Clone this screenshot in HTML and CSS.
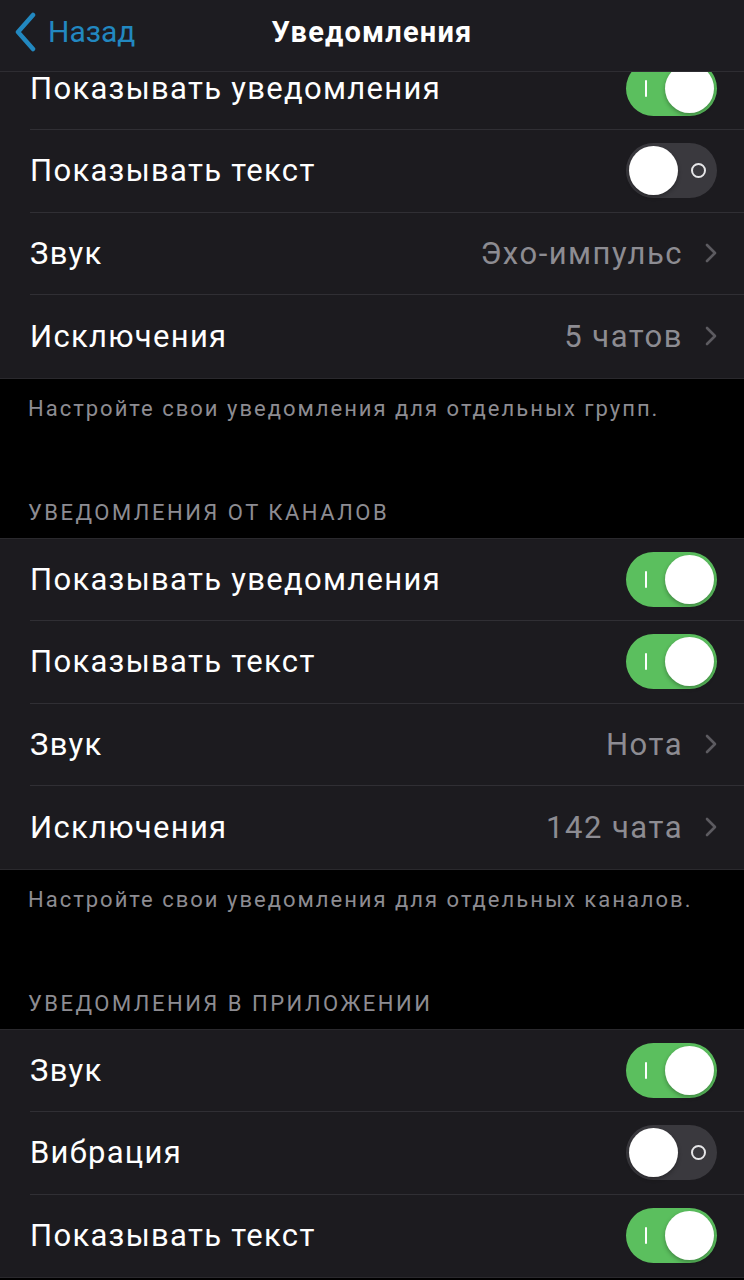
FILE: index.html
```html
<!DOCTYPE html>
<html>
<head>
<meta charset="utf-8">
<link rel="stylesheet" href="styles.css">
</head>
<body>

<div class="navbar">
  <a class="back" href="#">
    <svg class="back-icon" viewBox="0 0 24 40" width="24" height="40">
      <path d="M19 3 L4 20 L19 37" fill="none" stroke="currentColor" stroke-width="4.5" stroke-linecap="round" stroke-linejoin="round"/>
    </svg>
    <span>Назад</span>
  </a>
  <h1 class="title">Уведомления</h1>
  <span></span>
</div>

<div class="scroll">
  <div class="content">
    <div class="group">
      <div class="row">
        <span class="label">Показывать уведомления</span>
        <span class="switch on"></span>
      </div>
      <div class="row">
        <span class="label">Показывать текст</span>
        <span class="switch"></span>
      </div>
      <div class="row">
        <span class="label">Звук</span>
        <span class="value">Эхо-импульс</span>
        <svg class="chevron" viewBox="0 0 12 20" width="12" height="20"><path d="M2 2 L10 10 L2 18" fill="none" stroke="currentColor" stroke-width="2.6" stroke-linecap="round" stroke-linejoin="round"/></svg>
      </div>
      <div class="row">
        <span class="label">Исключения</span>
        <span class="value">5 чатов</span>
        <svg class="chevron" viewBox="0 0 12 20" width="12" height="20"><path d="M2 2 L10 10 L2 18" fill="none" stroke="currentColor" stroke-width="2.6" stroke-linecap="round" stroke-linejoin="round"/></svg>
      </div>
    </div>
    <p class="footer">Настройте свои уведомления для отдельных групп.</p>

    <h2 class="group-title">Уведомления от каналов</h2>
    <div class="group">
      <div class="row">
        <span class="label">Показывать уведомления</span>
        <span class="switch on"></span>
      </div>
      <div class="row">
        <span class="label">Показывать текст</span>
        <span class="switch on"></span>
      </div>
      <div class="row">
        <span class="label">Звук</span>
        <span class="value">Нота</span>
        <svg class="chevron" viewBox="0 0 12 20" width="12" height="20"><path d="M2 2 L10 10 L2 18" fill="none" stroke="currentColor" stroke-width="2.6" stroke-linecap="round" stroke-linejoin="round"/></svg>
      </div>
      <div class="row">
        <span class="label">Исключения</span>
        <span class="value">142 чата</span>
        <svg class="chevron" viewBox="0 0 12 20" width="12" height="20"><path d="M2 2 L10 10 L2 18" fill="none" stroke="currentColor" stroke-width="2.6" stroke-linecap="round" stroke-linejoin="round"/></svg>
      </div>
    </div>
    <p class="footer">Настройте свои уведомления для отдельных каналов.</p>

    <h2 class="group-title">Уведомления в приложении</h2>
    <div class="group">
      <div class="row">
        <span class="label">Звук</span>
        <span class="switch on"></span>
      </div>
      <div class="row">
        <span class="label">Вибрация</span>
        <span class="switch"></span>
      </div>
      <div class="row">
        <span class="label">Показывать текст</span>
        <span class="switch on"></span>
      </div>
    </div>
  </div>
</div>

</body>
</html>
```

FILE: styles.css
```css
html, body {
  margin: 0;
  padding: 0;
  height: 100%;
}

body {
  font-family: Roboto, "Noto Sans", Arial, sans-serif;
  background-color: #000;
  color: #fff;
  display: flex;
  flex-direction: column;
  overflow: hidden;
}

.navbar {
  height: 72px;
  flex-shrink: 0;
  box-sizing: border-box;
  padding-bottom: 8px;
  background-color: #1d1c21;
  border-bottom: 1px solid #2e2d32;
  display: grid;
  grid-template-columns: 1fr auto 1fr;
  align-items: center;
  position: relative;
  z-index: 2;
}

.back {
  display: flex;
  align-items: center;
  gap: 10px;
  padding-left: 14px;
  color: #2288c0;
  text-decoration: none;
  font-size: 30px;
}

.back-icon {
  display: block;
}

.title {
  margin: 0;
  font-size: 29px;
  font-weight: 700;
  letter-spacing: 1.2px;
  text-align: center;
}

.scroll {
  flex: 1;
  overflow: hidden;
}

.content {
  margin-top: -25.5px;
}

.group {
  background-color: #1c1b1f;
  border-top: 1px solid #2a292d;
  border-bottom: 1px solid #2a292d;
}

.row {
  height: 82.5px;
  margin-left: 30px;
  padding-right: 27px;
  display: flex;
  align-items: center;
  box-sizing: border-box;
  border-bottom: 1px solid #302f34;
}

.row:last-child {
  border-bottom: none;
}

.label {
  flex: 1;
  font-size: 31px;
  letter-spacing: 1.3px;
}

.value {
  font-size: 31px;
  letter-spacing: 1.5px;
  color: #8d8c92;
}

.chevron {
  color: #5c5b60;
  margin-left: 22px;
}

.switch {
  width: 91px;
  height: 55px;
  border-radius: 28px;
  background-color: #3a393e;
  position: relative;
  flex-shrink: 0;
}

/* knob */
.switch::before {
  content: "";
  position: absolute;
  top: 3px;
  left: 3px;
  width: 49px;
  height: 49px;
  border-radius: 50%;
  background-color: #fff;
  box-shadow: 0 2px 4px rgba(0, 0, 0, 0.3);
}

/* "O" mark when off */
.switch::after {
  content: "";
  position: absolute;
  top: 20px;
  right: 11px;
  width: 15px;
  height: 15px;
  border: 2px solid #e6e6e8;
  border-radius: 50%;
  box-sizing: border-box;
}

.switch.on {
  background-color: #5bbf5e;
}

.switch.on::before {
  left: auto;
  right: 3px;
}

/* "I" mark when on */
.switch.on::after {
  top: 19px;
  left: 19px;
  right: auto;
  width: 2px;
  height: 17px;
  border: none;
  border-radius: 1px;
  background-color: #fff;
}

.footer {
  margin: 0;
  padding: 17px 28px 0 28px;
  height: 121px;
  box-sizing: border-box;
  font-size: 22px;
  letter-spacing: 2px;
  color: #8d8c92;
}

.group-title {
  margin: 0;
  padding: 0 28px 13px 28px;
  font-size: 22px;
  font-weight: 400;
  letter-spacing: 2.5px;
  text-transform: uppercase;
  color: #8d8c92;
}
```
